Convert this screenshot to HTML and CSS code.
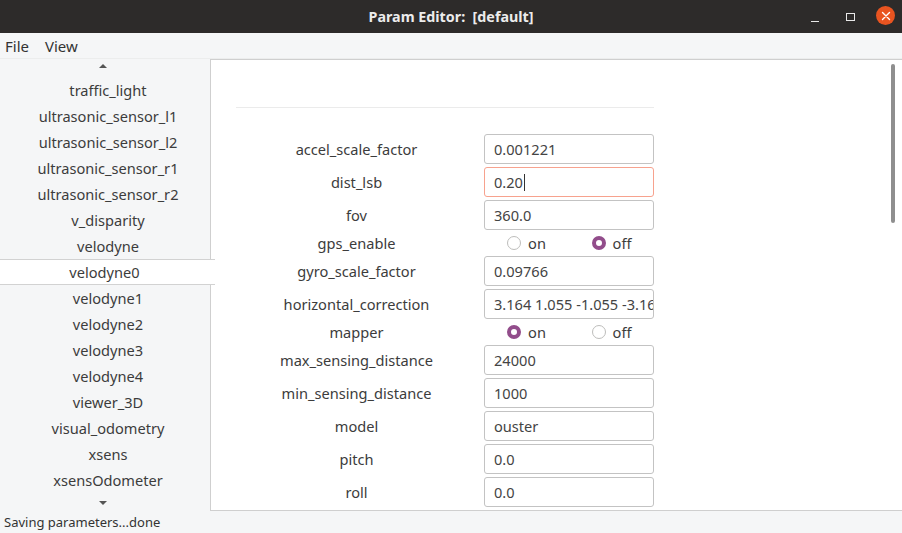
FILE: index.html
```html
<!DOCTYPE html>
<html>
<head>
<meta charset="utf-8">
<link rel="stylesheet" href="styles.css">
</head>
<body>
<div class="window">
  <div class="titlebar">
    <span class="title">Param Editor:&nbsp; [default]</span>
    <div class="controls">
      <span class="ctl-min"></span>
      <span class="ctl-max"></span>
      <span class="ctl-close">
        <svg width="10" height="10" viewBox="0 0 10 10"><path d="M1.5 1.5 L8.5 8.5 M8.5 1.5 L1.5 8.5" stroke="#fff" stroke-width="1.4" stroke-linecap="round"/></svg>
      </span>
    </div>
  </div>
  <div class="menubar"><span class="menu-item">File</span><span class="menu-item">View</span></div>
  <div class="main">
    <div class="tabs">
      <div class="arrow arrow-up"><span class="tri-up"></span></div>
      <div class="tab">traffic_light</div>
      <div class="tab">ultrasonic_sensor_l1</div>
      <div class="tab">ultrasonic_sensor_l2</div>
      <div class="tab">ultrasonic_sensor_r1</div>
      <div class="tab">ultrasonic_sensor_r2</div>
      <div class="tab">v_disparity</div>
      <div class="tab">velodyne</div>
      <div class="tab tab-selected">velodyne0</div>
      <div class="tab">velodyne1</div>
      <div class="tab">velodyne2</div>
      <div class="tab">velodyne3</div>
      <div class="tab">velodyne4</div>
      <div class="tab">viewer_3D</div>
      <div class="tab">visual_odometry</div>
      <div class="tab">xsens</div>
      <div class="tab">xsensOdometer</div>
      <div class="arrow arrow-down"><span class="tri-down"></span></div>
    </div>
    <div class="pane">
      <div class="form">
        <div class="sep"></div>
        <div class="grid">
          <div class="label">accel_scale_factor</div>
          <div class="field"><span class="input">0.001221</span></div>

          <div class="label">dist_lsb</div>
          <div class="field"><span class="input input-focus">0.20<span class="caret"></span></span></div>

          <div class="label">fov</div>
          <div class="field"><span class="input">360.0</span></div>

          <div class="label label-short">gps_enable</div>
          <div class="radios">
            <span class="radio-opt"><span class="radio"></span>on</span>
            <span class="radio-opt"><span class="radio radio-on"></span>off</span>
          </div>

          <div class="label">gyro_scale_factor</div>
          <div class="field"><span class="input">0.09766</span></div>

          <div class="label">horizontal_correction</div>
          <div class="field"><span class="input">3.164 1.055 -1.055 -3.164</span></div>

          <div class="label label-short">mapper</div>
          <div class="radios">
            <span class="radio-opt"><span class="radio radio-on"></span>on</span>
            <span class="radio-opt"><span class="radio"></span>off</span>
          </div>

          <div class="label">max_sensing_distance</div>
          <div class="field"><span class="input">24000</span></div>

          <div class="label">min_sensing_distance</div>
          <div class="field"><span class="input">1000</span></div>

          <div class="label">model</div>
          <div class="field"><span class="input">ouster</span></div>

          <div class="label">pitch</div>
          <div class="field"><span class="input">0.0</span></div>

          <div class="label">roll</div>
          <div class="field"><span class="input">0.0</span></div>
        </div>
      </div>
      <div class="scrollbar"></div>
    </div>
  </div>
  <div class="status">Saving parameters...done</div>
</div>
</body>
</html>
```
FILE: styles.css
```css
* { box-sizing: border-box; }
html, body { margin: 0; padding: 0; }
body {
  width: 902px;
  height: 533px;
  overflow: hidden;
  background: #f5f6f7;
  font-family: "Noto Sans", "DejaVu Sans", sans-serif;
  font-size: 14.6px;
  color: #3c3c3c;
}
.window { display: flex; flex-direction: column; height: 533px; }

.titlebar {
  position: relative;
  height: 33px;
  background: #2d2b2a;
  display: flex;
  align-items: center;
  justify-content: center;
}
.title {
  color: #ececec;
  font-weight: bold;
  font-size: 14.3px;
  margin-left: 0;
}
.controls {
  position: absolute;
  right: 7px;
  top: 0;
  height: 33px;
  display: flex;
  align-items: center;
}
.ctl-min {
  width: 8px; height: 1px; background: #e8e8e8;
  margin-top: 9px;
  margin-right: 27px;
}
.ctl-max {
  width: 9px; height: 8px; border: 1px solid #e8e8e8;
  margin-right: 21px;
}
.ctl-close {
  width: 19px; height: 19px; border-radius: 50%;
  background: #e95420;
  display: flex; align-items: center; justify-content: center;
  margin-top: -2px;
}
.ctl-close svg { display: block; }

.menubar {
  height: 26px;
  display: flex;
  align-items: center;
  padding-left: 5px;
  gap: 16px;
  font-size: 15px;
  color: #333;
  border-bottom: 1px solid #eceded;
}

.main { display: flex; height: 452px; }
.tabs {
  width: 210px;
  display: flex;
  flex-direction: column;
}
.arrow { height: 18px; display: flex; justify-content: center; align-items: center; padding-right: 4px; }
.tri-up {
  width: 0; height: 0;
  border-left: 4px solid transparent;
  border-right: 4px solid transparent;
  border-bottom: 4px solid #555;
  margin-top: -4px;
}
.tri-down {
  width: 0; height: 0;
  border-left: 4px solid transparent;
  border-right: 4px solid transparent;
  border-top: 4px solid #555;
  margin-top: 2px;
}
.tab {
  height: 26px;
  line-height: 26px;
  text-align: center;
  padding-left: 6px;
  white-space: nowrap;
}
.tab-selected {
  background: #fff;
  border-top: 1px solid #d2d2d2;
  border-bottom: 1px solid #d2d2d2;
  line-height: 24px;
  margin-right: -5px;
  padding-left: 0;
  padding-right: 6px;
  position: relative;
  z-index: 1;
}

.pane {
  flex: 1;
  position: relative;
  background: #fff;
  border: 1px solid #cfcfcf;
  border-right: none;
  padding-top: 47px;
  padding-left: 25px;
  overflow: hidden;
}
.form { width: 418px; }
.sep { height: 1px; background: #ebebeb; margin-bottom: 26px; }
.grid {
  display: grid;
  grid-template-columns: 241px 170px;
  column-gap: 7px;
  row-gap: 3px;
}
.label {
  height: 30px;
  line-height: 30px;
  text-align: center;
  white-space: nowrap;
}
.label-short { height: 20px; line-height: 20px; }
.field { height: 30px; }
.input {
  display: block;
  height: 30px;
  border: 1px solid #c3c3c3;
  border-radius: 3px;
  padding-left: 9px;
  line-height: 28px;
  white-space: nowrap;
  overflow: hidden;
  color: #444;
}
.input-focus { border-color: #f7a28e; }
.caret {
  display: inline-block;
  width: 1px;
  height: 17px;
  background: #333;
  vertical-align: -3px;
  margin-left: 1px;
}
.radios {
  height: 20px;
  display: grid;
  grid-template-columns: 1fr 1fr;
}
.radio-opt {
  display: flex;
  justify-content: center;
  align-items: center;
  gap: 7px;
}
.radio {
  width: 14px;
  height: 14px;
  border-radius: 50%;
  border: 1px solid #bdbdbb;
  background: #fff;
}
.radio-on {
  border: 4.5px solid #924d8b;
  background: #fff;
}
.scrollbar {
  position: absolute;
  right: 7px;
  top: 4px;
  width: 4px;
  height: 159px;
  border-radius: 2px;
  background: #8f8f8f;
}
.status {
  height: 22px;
  line-height: 22px;
  padding-left: 4px;
  font-size: 13px;
  color: #333;
}
```
